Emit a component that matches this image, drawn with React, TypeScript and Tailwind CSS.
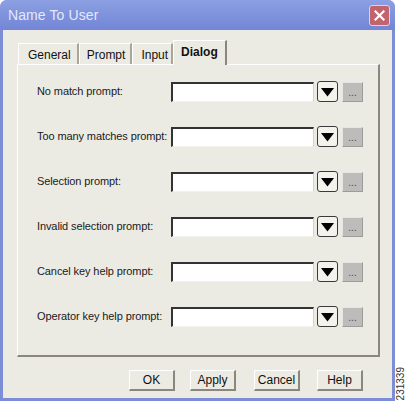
import React from "react";

const rows = [
  "No match prompt:",
  "Too many matches prompt:",
  "Selection prompt:",
  "Invalid selection prompt:",
  "Cancel key help prompt:",
  "Operator key help prompt:",
];

function Row({ label }: { label: string }) {
  return (
    <div className="flex items-center h-[21px]">
      <div className="w-[134px] whitespace-nowrap text-[11px] text-[#1a1a1a] leading-none tracking-[-0.1px]">{label}</div>
      <div className="w-[143px] h-[20px] bg-white border-t-[2px] border-l-[2px] border-t-[#333] border-l-[#333] border-b border-r border-b-[#f2f1ea] border-r-[#d8d4c4]" />
      <div className="ml-[3px] w-[21px] h-[21px] rounded-[3px] border border-[#3a3a3a] bg-[#f3f2ec] flex items-center justify-center">
        <svg width="13" height="10" viewBox="0 0 13 10">
          <path d="M0 1 L13 1 L6.5 9.5 Z" fill="#000" />
        </svg>
      </div>
      <div className="ml-[4px] w-[21px] h-[20px] mt-[1px] bg-[#bdbcba] border-b border-r border-b-[#9e9c98] border-r-[#9e9c98] border-t border-l border-t-[#e6e5e3] border-l-[#e6e5e3] flex items-end justify-center pb-[3px] text-[10px] leading-none text-[#4a4a4a]">
        ...
      </div>
    </div>
  );
}

function Tab({ label, active, pl, pr }: { label: string; active?: boolean; pl: string; pr: string }) {
  if (active) {
    return (
      <div className={`relative z-10 -mb-px h-[25px] ${pl} ${pr} pt-[4px] bg-[#ecebe3] border-t border-l border-t-white border-l-white border-r-[2px] border-r-[#8a887e] text-[12px] font-bold text-[#111] leading-[14px]`}>
        {label}
      </div>
    );
  }
  return (
    <div className={`h-[21px] mt-[3px] ${pl} ${pr} pt-[4px] bg-[#ecebe3] border-t border-l border-t-white border-l-white border-r-[2px] border-r-[#a9a698] text-[12px] text-[#111] leading-[14px]`}>
      {label}
    </div>
  );
}

function Btn({ label }: { label: string }) {
  return (
    <div className="w-[46px] h-[21px] flex items-center justify-center bg-[#ecebe3] border-t border-l border-t-white border-l-white border-b-[2px] border-r-[2px] border-b-[#8a887e] border-r-[#8a887e] text-[12px] text-[#111]">
      {label}
    </div>
  );
}

export default function App() {
  return (
    <div className="w-[406px] h-[402px] bg-white flex" style={{ fontFamily: '"Liberation Sans", Arial, sans-serif' }}>
      <div className="w-[395px] h-[401px] flex flex-col rounded-t-[7px] bg-[#7d8ed6] overflow-hidden">
        <div className="h-[30px] flex items-center justify-between pl-[8px] pr-[5px] bg-gradient-to-b from-[#8da0e4] via-[#7e92dc] to-[#7386d6]">
          <span className="text-[14px] text-[#e4e9fa] tracking-[0.1px]">Name To User</span>
          <div className="w-[21px] h-[21px] rounded-[3px] bg-[#c0646e] border border-[#e6d0d8] flex items-center justify-center">
            <svg width="11" height="11" viewBox="0 0 11 11">
              <path d="M1.5 1.5 L9.5 9.5 M9.5 1.5 L1.5 9.5" stroke="#fff" strokeWidth="2.2" strokeLinecap="square" />
            </svg>
          </div>
        </div>
        <div className="flex-1 mx-[3px] mb-[3px] bg-[#ecebe3] flex flex-col pl-[14px] pt-[10px]">
          <div className="flex items-start h-[24px] pl-[1px]">
            <Tab label="General" pl="pl-[9px]" pr="pr-[6px]" />
            <Tab label="Prompt" pl="pl-[7px]" pr="pr-[5px]" />
            <Tab label="Input" pl="pl-[8px]" pr="pr-[3px]" />
            <Tab label="Dialog" pl="pl-[7px]" pr="pr-[7px]" active />
          </div>
          <div className="w-[363px] h-[293px] border-t border-l border-t-white border-l-white border-r-[2px] border-b-[2px] border-r-[#8a887e] border-b-[#8a887e] bg-[#ecebe3] pl-[19px] pt-[16px] flex flex-col gap-[24px]">
            {rows.map((r) => (
              <Row key={r} label={r} />
            ))}
          </div>
          <div className="flex pl-[112px] mt-[13px]">
            <Btn label="OK" />
            <div className="w-[15px]" />
            <Btn label="Apply" />
            <div className="w-[18px]" />
            <Btn label="Cancel" />
            <div className="w-[17px]" />
            <Btn label="Help" />
          </div>
        </div>
      </div>
      <div className="flex-1 flex items-end justify-center pb-[2px]">
        <span className="block text-[10px] text-[#333] leading-none [writing-mode:vertical-rl] rotate-180">231339</span>
      </div>
    </div>
  );
}
